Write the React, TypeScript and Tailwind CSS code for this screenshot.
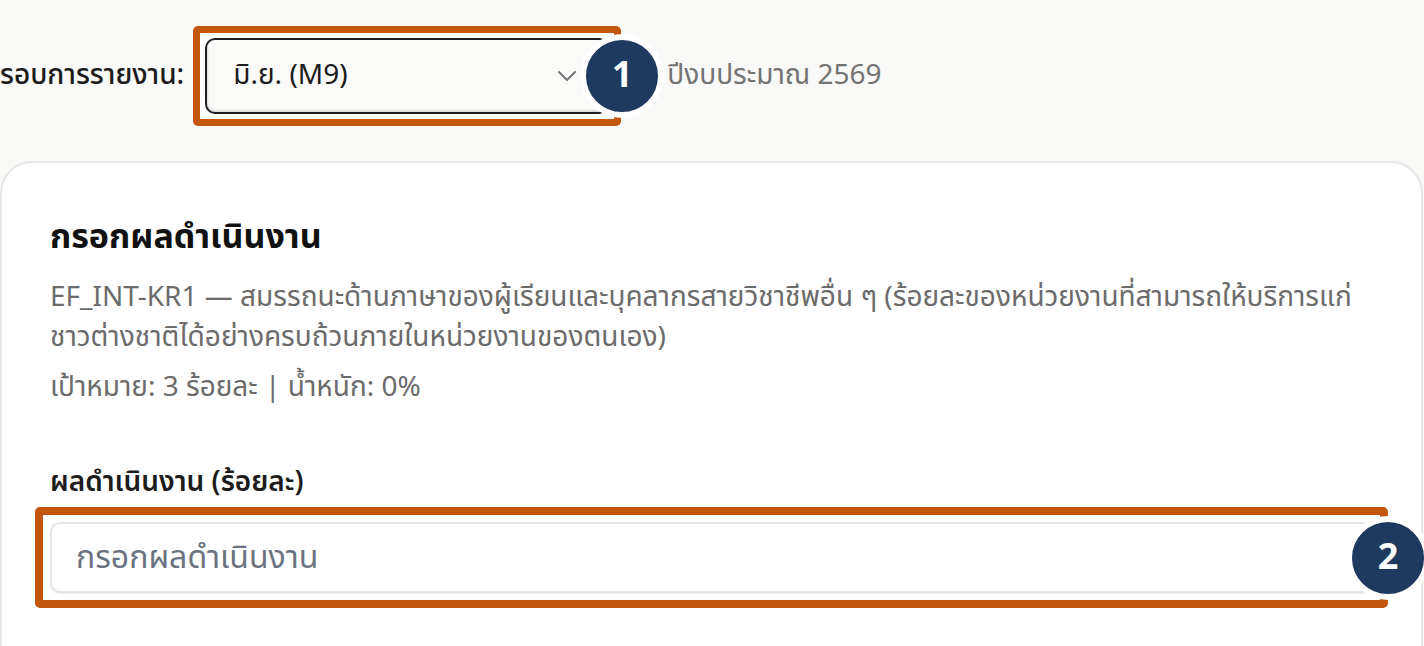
import React from "react";

const font = { fontFamily: '"Noto Sans Thai", "Noto Sans", sans-serif' };

function Badge({ n }: { n: string }) {
  return (
    <div className="absolute right-[-50px] top-1/2 -translate-y-1/2 flex h-[84px] w-[84px] items-center justify-center rounded-full border-[6px] border-white bg-[#1f3a5f] text-[36px] font-bold leading-none text-white">
      {n}
    </div>
  );
}

export default function App() {
  return (
    <div className="h-[646px] w-[1424px] overflow-hidden bg-[#f9f9f7]" style={font}>
      <div className="flex items-center pt-[26px]">
        <span className="mr-[9px] text-[28px] font-medium text-[#1c1c1c]">รอบการรายงาน:</span>
        <div className="relative w-[428px] rounded-[5px] border-[7px] border-[#c2570c] bg-white p-[5px]">
          <div className="flex h-[76px] items-center justify-between rounded-[10px] border-2 border-[#1f1f1f] bg-[#fafaf9] pl-[26px] pr-[30px] shadow-[inset_1px_-2px_2px_rgba(0,0,0,0.12)]">
            <span className="text-[28px] text-[#1c1c1c]">มิ.ย. (M9)</span>
            <svg width="20" height="12" viewBox="0 0 20 12" fill="none" stroke="#737373" strokeWidth="2" strokeLinecap="round" strokeLinejoin="round">
              <path d="M2 2l8 8 8-8" />
            </svg>
          </div>
          <Badge n="1" />
        </div>
        <span className="ml-[46px] text-[28px] text-[#737373]">ปีงบประมาณ 2569</span>
      </div>

      <div className="mr-[1px] mt-[35px] rounded-[32px] border-2 border-[#e6e6e4] bg-white px-[48px] pt-[55px] pb-[120px]">
        <h2 className="text-[34px] font-bold leading-[40px] text-[#111111]">กรอกผลดำเนินงาน</h2>
        <p className="mt-[20px] text-[28px] leading-[40px] text-[#6b6b6b]">
          EF_INT-KR1 — สมรรถนะด้านภาษาของผู้เรียนและบุคลากรสายวิชาชีพอื่น ๆ (ร้อยละของหน่วยงานที่สามารถให้บริการแก่
          <br />
          ชาวต่างชาติได้อย่างครบถ้วนภายในหน่วยงานของตนเอง)
        </p>
        <p className="mt-[10px] text-[28px] leading-[40px] text-[#6b6b6b]">เป้าหมาย: 3 ร้อยละ | น้ำหนัก: 0%</p>
        <div className="mt-[55px] text-[28px] font-semibold leading-[40px] text-[#1c1c1c]">ผลดำเนินงาน (ร้อยละ)</div>
        <div className="relative -mx-[15px] mt-[4px] rounded-[5px] border-[8px] border-[#c2570c] bg-white p-[7px]">
          <input
            placeholder="กรอกผลดำเนินงาน"
            className="block h-[71px] w-full rounded-[10px] border-2 border-[#e5e5e5] bg-white px-[24px] text-[32px] text-[#1c1c1c] shadow-[0_1px_2px_rgba(0,0,0,0.08)] outline-none placeholder:text-[#6b7280]"
            style={font}
          />
          <Badge n="2" />
        </div>
      </div>
    </div>
  );
}
